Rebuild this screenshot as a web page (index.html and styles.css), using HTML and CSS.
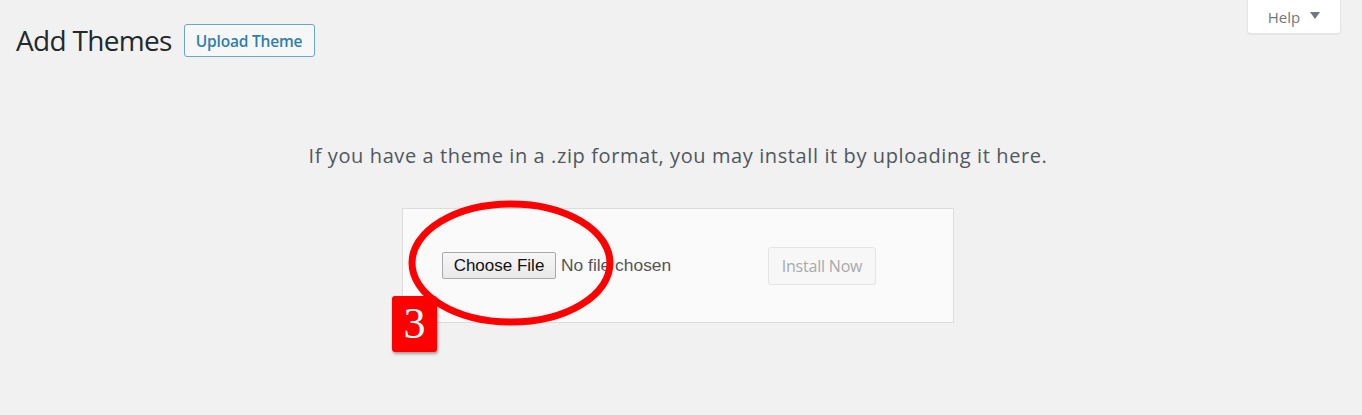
FILE: index.html
```html
<!DOCTYPE html>
<html>
<head>
<meta charset="utf-8">
<link rel="stylesheet" href="styles.css">
</head>
<body>
<div class="help-tab">Help <span class="caret"></span></div>
<div class="wrap">
  <div class="header">
    <h1 class="title">Add Themes</h1>
    <button class="upload-btn">Upload Theme</button>
  </div>
  <p class="help-text">If you have a theme in a .zip format, you may install it by uploading it here.</p>
  <div class="box-row">
    <div class="upload-box">
      <div class="file-input">
        <button class="choose-btn">Choose File</button>
        <span class="no-file">No file chosen</span>
      </div>
      <button class="install-btn">Install Now</button>
      <svg class="ring" width="206" height="126" viewBox="0 0 206 126">
        <ellipse cx="103" cy="63" rx="99" ry="59" fill="none" stroke="#ff0000" stroke-width="7"/>
      </svg>
      <div class="badge">3</div>
    </div>
  </div>
</div>
</body>
</html>
```
FILE: styles.css
```css
html, body {
  margin: 0;
  padding: 0;
  background: #f1f1f1;
  height: 100%;
}
body {
  position: relative;
  font-family: "Open Sans", "Noto Sans", sans-serif;
  overflow: hidden;
}
.help-tab {
  position: absolute;
  top: -1px;
  right: 21px;
  width: 94px;
  height: 35px;
  box-sizing: border-box;
  background: #fff;
  border: 1px solid #e2e4e7;
  border-top: none;
  border-radius: 0 0 4px 4px;
  box-shadow: 0 1px 1px rgba(0,0,0,0.05);
  color: #72777c;
  font-size: 15px;
  display: flex;
  align-items: center;
  justify-content: center;
  gap: 10px;
  padding-top: 1px;
}
.caret {
  width: 0;
  height: 0;
  border-left: 5px solid transparent;
  border-right: 5px solid transparent;
  border-top: 7px solid #72777c;
  margin-top: -3px;
}
.wrap {
  padding: 0 22px 0 16px;
}
.header {
  display: flex;
  align-items: center;
  gap: 12px;
  padding-top: 24px;
}
.title {
  margin: 0;
  font-weight: 400;
  font-size: 28px;
  letter-spacing: -0.7px;
  color: #23282d;
  line-height: 33px;
}
.upload-btn {
  height: 33px;
  width: 131px;
  padding: 0;
  background: #f7f7f7;
  border: 1px solid #6aa6c8;
  border-radius: 3px;
  color: #2e7fac;
  font-family: "Open Sans", sans-serif;
  font-weight: 600;
  font-size: 15.5px;
  letter-spacing: -0.2px;
}
.help-text {
  margin: 87px 0 0;
  text-align: center;
  font-size: 20px;
  letter-spacing: 0.6px;
  color: #50575e;
  line-height: 24px;
}
.box-row {
  display: flex;
  justify-content: center;
  margin-top: 40px;
}
.upload-box {
  position: relative;
  box-sizing: border-box;
  width: 552px;
  height: 115px;
  background: #fafafa;
  border: 1px solid #dcdcdc;
  display: flex;
  align-items: center;
  padding: 0 0 0 39px;
}
.file-input {
  width: 326px;
  display: flex;
  align-items: center;
  gap: 5px;
}
.choose-btn {
  height: 27px;
  width: 114px;
  padding: 0;
  background: linear-gradient(#f6f6f6, #e9e9e9);
  border: 1px solid #a9a9a9;
  border-radius: 2px;
  font-family: "Liberation Sans", Arial, sans-serif;
  font-size: 17px;
  color: #111;
}
.no-file {
  font-family: "Liberation Sans", Arial, sans-serif;
  font-size: 17.4px;
  color: #555;
}
.install-btn {
  width: 108px;
  height: 38px;
  padding: 0;
  background: #f7f7f7;
  border: 1px solid #e4e4e4;
  border-radius: 3px;
  color: #a7aaad;
  font-family: "Open Sans", sans-serif;
  font-size: 16px;
  letter-spacing: -0.2px;
}
.ring {
  position: absolute;
  left: 5px;
  top: -9px;
}
.badge {
  position: absolute;
  left: -11px;
  top: 87px;
  width: 45px;
  height: 56px;
  background: #ff0000;
  border-radius: 3px;
  box-shadow: 1px 2px 3px rgba(0,0,0,0.35);
  color: #fff;
  font-family: "Liberation Serif", "Times New Roman", serif;
  font-size: 44px;
  line-height: 56px;
  text-align: center;
}
```
